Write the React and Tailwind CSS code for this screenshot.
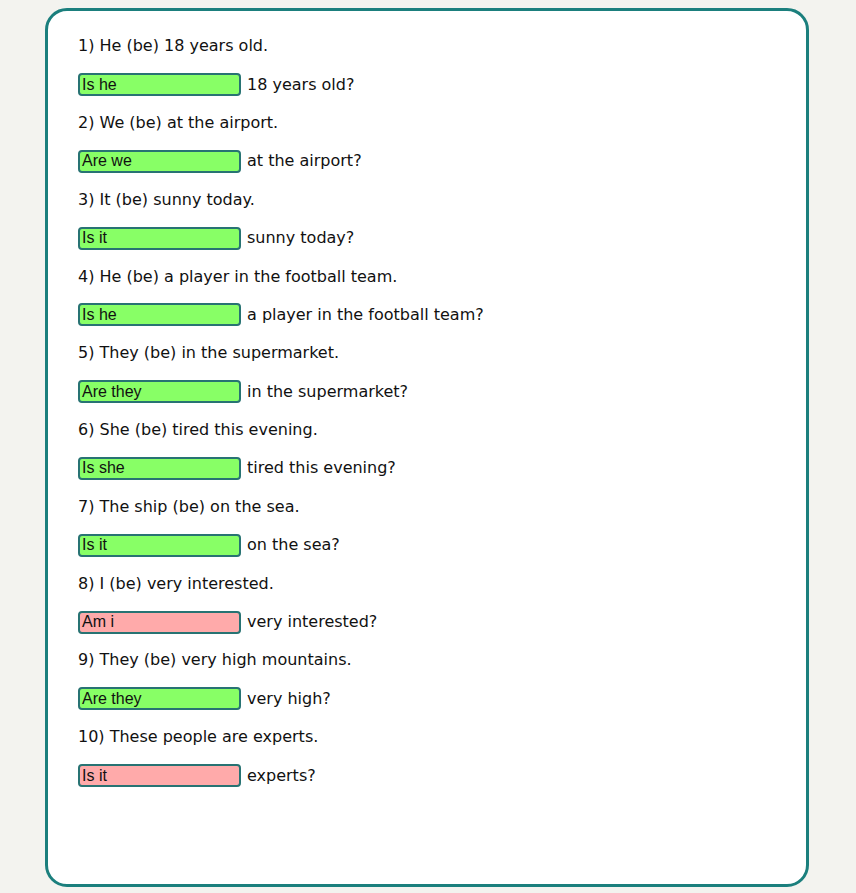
import React from 'react';

const items = [
  { q: '1) He (be) 18 years old.', a: 'Is he', rest: '18 years old?', ok: true },
  { q: '2) We (be) at the airport.', a: 'Are we', rest: 'at the airport?', ok: true },
  { q: '3) It (be) sunny today.', a: 'Is it', rest: 'sunny today?', ok: true },
  { q: '4) He (be) a player in the football team.', a: 'Is he', rest: 'a player in the football team?', ok: true },
  { q: '5) They (be) in the supermarket.', a: 'Are they', rest: 'in the supermarket?', ok: true },
  { q: '6) She (be) tired this evening.', a: 'Is she', rest: 'tired this evening?', ok: true },
  { q: '7) The ship (be) on the sea.', a: 'Is it', rest: 'on the sea?', ok: true },
  { q: '8) I (be) very interested.', a: 'Am i', rest: 'very interested?', ok: false },
  { q: '9) They (be) very high mountains.', a: 'Are they', rest: 'very high?', ok: true },
  { q: '10) These people are experts.', a: 'Is it', rest: 'experts?', ok: false },
];

export default function App() {
  return (
    <div className="min-h-[893px] bg-[#f3f3ef] pt-[8px]">
      <div className="ml-[45px] w-[764px] h-[879px] bg-white border-[3px] border-[#1b7f7d] rounded-[22px] pl-[30px] pt-[16px] text-[16px] text-[#111]" style={{ fontFamily: '"DejaVu Sans", Verdana, sans-serif' }}>
        {items.map((it, i) => (
          <div key={i}>
            <div className="h-[38.4px] flex items-center">{it.q}</div>
            <div className="h-[38.4px] flex items-center gap-[6px]">
              <div
                className={`w-[163px] h-[23px] border-2 border-[#287373] rounded-[4px] flex items-center px-[2px] text-[16px] text-[#111] ${it.ok ? 'bg-[#88ff66]' : 'bg-[#ffaaaa]'}`}
                style={{ fontFamily: '"Liberation Sans", Arial, sans-serif' }}
              >
                {it.a}
              </div>
              <span>{it.rest}</span>
            </div>
          </div>
        ))}
      </div>
    </div>
  );
}
